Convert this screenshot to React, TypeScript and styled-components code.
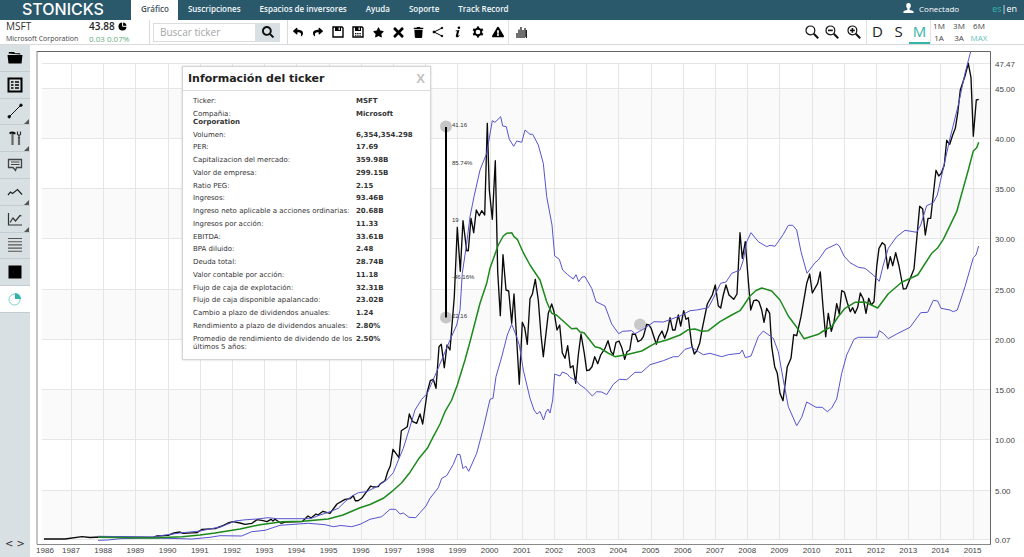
import React from "react";
import styled, { createGlobalStyle } from "styled-components";
import { FaReply, FaShare, FaStar, FaTimes, FaSearch, FaTrash, FaExclamationTriangle } from "react-icons/fa";

const GlobalStyle = createGlobalStyle`
  *, *::before, *::after { box-sizing: border-box; }
  body { margin: 0; background: #fff; color: #222; font-family: "Open Sans", "Noto Sans", sans-serif; }
  button { font: inherit; color: inherit; background: none; border: 0; padding: 0; cursor: pointer; }
  a { color: inherit; text-decoration: none; }
  svg { display: block; }
`;

const Page = styled.div`
  display: flex;
  flex-direction: column;
  min-height: 100vh;
`;

/* ---------- header ---------- */

const Header = styled.header`
  display: flex;
  align-items: stretch;
  height: 20px;
  background: #2a596b;
  color: #fff;
  font-size: 8px;
  line-height: 20px;
`;

const Logo = styled.a`
  width: 131px;
  padding-left: 22px;
  font: 500 16px/18px Inter, sans-serif;
`;

const Nav = styled.nav`
  display: flex;
  flex: 1;
`;

const NavLink = styled.a<{ $active?: boolean }>`
  height: 20px;
  padding: 0 9px 0 10px;
  line-height: 17px;
  font-weight: 600;
  background: ${(p) => (p.$active ? "#fff" : "transparent")};
  color: ${(p) => (p.$active ? "#41525b" : "#f4f8fa")};
`;

const Account = styled.div`
  display: flex;
  align-items: center;
  gap: 5px;
  padding-right: 33px;
  height: 17px;
  line-height: 17px;
`;

const Languages = styled.div`
  padding-right: 7px;
  font-size: 9px;
  line-height: 17px;
`;

const ActiveLanguage = styled.a`
  color: #35b5a8;
`;

/* ---------- toolbar ---------- */

const Toolbar = styled.div`
  display: flex;
  height: 25px;
  border-bottom: 1px solid #d9d9d9;
`;

const Quote = styled.div`
  display: grid;
  grid-template-columns: 83px 1fr;
  align-content: center;
  width: 150px;
  padding-left: 6px;
  border-right: 1px solid #d9d9d9;
  white-space: nowrap;
  line-height: 11px;
`;

const Symbol = styled.span`
  font-size: 10px;
  line-height: 13px;
  color: #333;
`;

const Price = styled.span`
  display: flex;
  align-items: center;
  gap: 3px;
  font-size: 10px;
  line-height: 13px;
  font-weight: 600;
`;

const Company = styled.span`
  font-size: 7px;
  color: #444;
`;

const Change = styled.span`
  font-size: 8px;
  color: #62ad7c;
`;

const SearchForm = styled.form`
  display: flex;
  align-items: center;
  width: 138px;
  padding-left: 3px;
  border-right: 1px solid #d9d9d9;
`;

const SearchInput = styled.input`
  width: 102px;
  height: 19px;
  padding: 0 6px;
  border: 1px solid #d9dddf;
  border-right: 0;
  border-radius: 0;
  font: 10px "Open Sans", sans-serif;
  color: #333;
  outline: none;
  &::placeholder { color: #a5a5a5; opacity: 1; }
`;

const SearchButton = styled.button`
  display: grid;
  place-items: center;
  width: 25px;
  height: 19px;
  background: #d8e0e3;
  color: #111;
`;

const ToolGroup = styled.div<{ $divided?: boolean }>`
  display: flex;
  align-items: center;
  color: #000;
  border-right: ${(p) => (p.$divided ? "1px solid #e2e2e2" : "0")};
`;

const ToolButton = styled.button<{ $wide?: boolean }>`
  display: grid;
  place-items: center;
  width: ${(p) => (p.$wide ? "24px" : "20px")};
  height: 24px;
`;

const RightTools = styled.div`
  display: flex;
  margin-left: auto;
  padding-right: 37px;
`;

const PeriodButton = styled.button<{ $active?: boolean }>`
  width: 21px;
  height: 24px;
  font-size: 15px;
  line-height: 22px;
  color: ${(p) => (p.$active ? "#35b5a8" : "#222")};
  border-bottom: 2px solid ${(p) => (p.$active ? "#35b5a8" : "transparent")};
`;

const RangeGrid = styled.div`
  display: grid;
  grid-template-columns: repeat(3, 16px);
  grid-auto-rows: 12px;
  column-gap: 4px;
  border-left: 1px solid #e2e2e2;
  font-size: 8px;
  line-height: 12px;
`;

const RangeButton = styled.button<{ $active?: boolean }>`
  display: flex;
  justify-content: center;
  white-space: nowrap;
  color: ${(p) => (p.$active ? "#5fc2b8" : "#444")};
`;

/* ---------- work area ---------- */

const Workspace = styled.main`
  display: flex;
  flex: 1;
`;

const Sidebar = styled.aside`
  display: flex;
  flex-direction: column;
  justify-content: space-between;
  width: 30px;
  background: #d8e0e3;
`;

const SideTools = styled.div`
  display: grid;
  grid-template-rows: repeat(10, 1fr);
  height: 268px;
`;

const SideButton = styled.button<{ $active?: boolean; $menu?: boolean }>`
  position: relative;
  display: grid;
  place-items: center;
  border-bottom: 1px solid #c3cdd1;
  background: ${(p) => (p.$active ? "#fff" : "transparent")};
  &::after {
    content: "";
    display: ${(p) => (p.$menu ? "block" : "none")};
    position: absolute;
    right: 1px;
    bottom: 0;
    border-left: 5px solid transparent;
    border-bottom: 5px solid #555;
  }
`;

const CodeToggle = styled.button`
  height: 26px;
  font: 10px/26px "DejaVu Sans", sans-serif;
  color: #333;
  white-space: nowrap;
`;

const ChartArea = styled.section`
  position: relative;
  flex: 1;
  min-width: 0;
`;

const ChartSvg = styled.svg`
  width: 100%;
  height: auto;
`;

const AxisText = styled.text`
  font: 8px "Liberation Sans", Arial, sans-serif;
  fill: #444;
`;

const NoteText = styled.text`
  font: 6px "Liberation Sans", Arial, sans-serif;
  fill: #333;
`;

/* ---------- ticker dialog ---------- */

const Dialog = styled.section`
  position: absolute;
  top: 21px;
  left: 152px;
  display: flex;
  flex-direction: column;
  width: 249px;
  height: 294px;
  background: #fff;
  border: 1px solid #d5d5d5;
  box-shadow: 0 0 2px #ccc;
  font-family: "DejaVu Sans", Verdana, sans-serif;
`;

const DialogHead = styled.div`
  display: flex;
  justify-content: space-between;
  align-items: center;
  height: 24px;
  padding: 0 5px;
  border-bottom: 1px solid #ddd;
`;

const DialogTitle = styled.h2`
  margin: 0;
  font-size: 11px;
  line-height: 23px;
`;

const CloseButton = styled.button`
  font: bold 13px "Liberation Sans", sans-serif;
  color: #c2c2c2;
`;

const Facts = styled.dl`
  flex: 1;
  display: flex;
  flex-direction: column;
  justify-content: space-between;
  margin: 0;
  padding: 6px 8px 8px 10px;
  font-size: 7px;
  line-height: 8px;
  color: #333;
`;

const Fact = styled.div`
  dt { display: inline-block; width: 163px; padding-right: 1px; vertical-align: top; }
  dd { display: inline; margin: 0; font-weight: bold; }
`;

/* ---------- data ---------- */

const years = Array.from({ length: 30 }, (_, i) => 1986 + i);
const yearX = (year: number) => (year === 1986 ? 44 : 71 + (year - 1987) * 32.2);

const levels: [string, number][] = [
  ["47.47", 63.5], ["45.00", 88.5], ["40.00", 138.5], ["35.00", 188.5], ["30.00", 238.5],
  ["25.00", 289.5], ["20.00", 339.5], ["15.00", 389.5], ["10.00", 439.5], ["5.00", 490.5], ["0.07", 539.5],
];

const pricePoints =
  "44,539 65,539 82,536.7 90,537.5 100,537 153,537.3 157,536 168,535.3 174,533 180,532 183,533.3 197,532.7 202,529.3 215,528.7 222,526 228,523 233,521.7 240,523 245,524.3 252,523.3 257,519.7 263,520.7 267,521.7 271,519.3 273,521 275,519.3 281,523.3 285,522 302,521.7 308,516 311,518 316,514 318,515 323,511.3 330,513.3 334,508 337,504 345,499.3 350,498.7 353.3,495.7 355.3,500.7 358,500.7 361.7,498.3 367.3,490.7 370.7,486 373,487 378.3,486.7 380,484 385,480.7 387.7,471.7 390.3,466 393,449.3 399,457.7 401.3,430.7 407.3,426.7 409.3,414 412.3,421.3 416.7,423.3 420,414 422.7,424 427.3,391.7 430.3,380.7 433.3,379.3 436,388.3 439,346.7 441.3,344.3 444.3,367.7 447,345 450,350 454.3,296.7 457.3,227.3 460.3,271.3 463,220.7 466.7,250.7 468.3,250.7 471,218.3 473.7,232.7 476.3,210 479.3,215.7 481.7,210.7 484.7,215 487.3,123.3 489.3,190 492.3,219.3 495.3,160.7 497.7,271.7 500.3,315.7 503,254.7 506,290 508.7,291 511.7,323.3 514,294 519.3,384.3 522.3,322.3 524.7,327.7 527.3,344.3 530,298.7 532.3,294.3 535.3,279.3 538.3,300 541,335 543.3,356.7 548.3,313.3 551.7,304 554,311.7 557,330 559.7,325 562.3,352.7 565,358.3 567.7,345.7 570.3,367.7 573,365.7 575.7,383.3 578.3,355 581,334 584.3,353.3 586.7,370.7 589.3,370 592,366.7 594.7,356.7 597.7,363.7 600.7,355 605,348.3 608,340.7 611,351.7 613.3,354.7 616,342.3 619,341 622,348.3 624.7,359.3 627,351.7 629.7,350 632.3,334 635.3,334.3 638,341.7 641,340 643.3,336.7 646.7,324.3 649,325 651.3,328.7 656.3,344.3 658.7,336.7 662,331 664.7,338.3 667.7,330 670,317.7 672.7,330 675,330 678.3,315 680.7,326 683.7,310.7 686,319.3 688.3,317.7 691.7,345 694.3,354 696.7,351 699.7,343.3 702.3,328.3 707.3,304 712.3,295 715.3,285 718.3,306 720.7,308 723.3,295 726,285 729,295 733.7,299.3 737,294 740,232.7 742.3,258.3 745.3,241.7 748,276.7 750.7,310 753.7,300.7 756.7,300 759,301.7 761.7,310 764,322.3 766.7,308.3 769.7,313.3 771.7,346.7 774.7,366.7 777.3,373.3 780,393.3 783,400.7 787.3,366.7 791,358.3 793.7,334.7 796.7,335.7 801,316.7 806.7,283.3 809.7,274 812.3,293 817.7,283.3 820.3,272 823,306.7 825.7,336.7 828.3,313.3 831.3,331.3 834,321.7 836.7,303.7 839.3,314 841.7,290.7 844.3,292 847.3,302.7 850.3,311.7 852.7,307.7 855,313.3 857.7,307.3 860.3,293 863.3,299 866,313.3 868.7,298.3 871.3,305 874,301.7 876.7,266.7 879,248.3 882.3,242.7 885,245 887.7,268.7 890.3,256.7 892.7,265.7 895.7,252.7 899,266 903.3,289 906,288.7 914,269 919.7,206.3 922.7,209 925.3,235 928,218.3 930.7,218.3 936,170.3 938.7,176 941.3,173.3 944.3,165 946.7,140.3 949.7,144.3 952.7,135 955.3,128.3 957.7,113.3 960.3,90 965,76 968.3,63.3 971,77.7 973.3,136.3 976.3,100 978.7,99.3";

const averagePoints =
  "98,537.3 152,538 182,536.7 200,535 215,533 240,529 260,524.7 282,521.7 303,521.3 328,519 343,515 360,507.7 370,504.5 383.3,498.3 391.7,491.7 401.7,482.7 409.3,473.3 418.3,459.3 427.3,448.3 433.3,436.7 440,424 445,411.7 451.7,400 457.3,385 465,360 470,341.7 480,303.3 486.7,283.3 490,268.3 498.3,245 503.3,236 506.7,233.3 511.7,232.7 514,236.7 517.3,239.3 523.3,252.7 530,265 540,280 546.7,301.7 551.7,313.3 556.7,315.3 571.7,328.7 576.7,328.3 580,332 584,332.7 595,346.7 600,348 608,353 615,356.7 628.3,354.3 641.7,351 655,343.3 666.7,340 680,335 688.3,329.7 695,329 701.7,331.3 708.3,330.7 720,321.7 731.7,315 740,310.7 744,305 750,296 756,290.5 761.7,288 771.7,291 780,300 788.3,316 796.7,327.3 804,338.7 818.3,334.3 823.3,331 831.7,326.7 838,317 845,308.3 855,302.3 865,302 877.7,308 888.3,293.7 901.7,282.3 917.7,275 931.7,253.3 937.3,248.3 943.3,239.3 956.7,211.7 968.3,170 973.3,151 976.7,147.7 978.7,142.3";

const upperPoints =
  "98,536.3 153,537 165,535 180,533 200,531 222,526.5 235,521 245,519.8 257,519 268,517.7 277,518.7 310,518.7 320,515 330,511.7 338.3,508.3 345,501.7 352,496 358.3,492.7 366.7,491.7 376.7,486.7 386.7,480 393.3,472.7 398,461 403.3,448.3 410,426.7 415,410 421.7,399.3 427.3,393.3 436.7,371.7 450,340 456.7,325 460,310 462.3,273.3 466.7,243.3 470,216.7 474,196.7 480,170 486.7,153.3 492.3,120.7 495,122.3 500.7,116.7 502.7,126 506.3,126.7 509.3,139.3 513.7,146.3 516.7,141 521.7,142.3 525,130 530,134.3 532.7,134.3 538.3,145 543.3,163.3 546.7,196.7 552,225 554.7,256 559.3,259.3 562.7,270 567.7,274.7 573.3,279 576,274.7 578.7,281.7 582,277 585,276.7 591.7,288.3 596,301.7 605,306 611.7,324 618.7,333.7 622.7,331.3 631.7,330.7 635,333.7 643.3,329.3 654,321.7 663.3,322 680,316 690,310.7 696.7,310 708.3,307.7 713.3,298.3 720.7,283.3 726,282 731.7,273.3 740,270 743.3,260 746.7,241.7 751,232.7 758.3,241.7 766.7,246.7 770,245.3 775,246.3 783.3,234.3 788.3,225.3 792.7,225.3 796.7,230 801,251.7 807,273.3 815,262.7 818.3,260 826,249 836.7,244 839.3,246 844,256 850,262.7 858.3,267.3 865,268.3 873.3,275 879.3,281.3 883.3,265 888.3,248.3 896.7,236.7 905,230.3 916.7,232.3 920.7,225 926.7,205.7 933.3,202.7 937.3,195 943.3,168.3 950,138.3 958.3,105 965,73.3 970.7,51.5";

const lowerPoints =
  "98,540.3 108,540 120,538.7 150,538 175,538.5 192,539 210,537.3 220,535.7 241.7,536 251.7,531.7 265,530.3 280,525.3 308.3,523.3 325,524.7 333.3,526.7 341,525.5 351.7,526.7 360,524.3 370,519.3 381.7,516.7 390,509.3 395.7,509.3 400,514 403.3,513 409,517.3 415.7,517.7 420,512.7 426,506 430,498.3 438.3,487.7 441.7,478.3 446.7,475.7 453.3,464.3 457.3,454.3 460,454.7 463,468.7 465.7,466 468.7,471.3 476.7,453.3 483.3,428.3 490,399.3 493,398.3 496,376.7 501.7,357 507.3,335 511.7,324.3 516,335 519.3,345 523.3,370 530,398.3 534,410 537,414 540,411.5 543.5,420 546,412 548,409 550,413 552.7,400 554.7,374 560,376 562.3,372 567.3,374 570,377.3 576.7,381 580,385 585,388.3 592.3,396 596.7,391.7 601.7,392 606.7,394.7 613.3,384.3 619.3,379.3 626.7,379.7 635,372.3 641.7,372.3 650,364.7 663.3,360.7 673.3,356.7 678.3,356.7 685,349.3 691.7,347.3 698.3,351.7 703.3,354.7 710,353.3 721.7,356.7 728.3,354.7 740,353.3 742.3,350 745.3,357.7 751,356 758.3,336.7 763.3,331 773.3,338.3 778.3,351.7 783.3,380 788.3,406.7 796.7,425.7 801.7,417.3 806.7,402 816,407.3 822.3,407.3 827.3,411.7 831.7,408 836.7,399 841.7,373.3 846.7,355 854,339.3 858.3,337.3 877.3,337.3 879.3,330.7 883.3,333.3 888.3,338.7 896.7,334 910,327.3 920.7,312.7 927.7,312.3 933.3,300.3 937.7,301 941,308.3 950,310 953.3,311.7 957.3,310 965,286.7 973.3,257.7 976,255 978.7,246";

const facts: [string, string][] = [
  ["Ticker:", "MSFT"],
  ["Compañia:", "Microsoft Corporation"],
  ["Volumen:", "6,354,354.298"],
  ["PER:", "17.69"],
  ["Capitalizacion del mercado:", "359.98B"],
  ["Valor de empresa:", "299.15B"],
  ["Ratio PEG:", "2.15"],
  ["Ingresos:", "93.46B"],
  ["Ingreso neto aplicable a acciones ordinarias:", "20.68B"],
  ["Ingresos por acción:", "11.33"],
  ["EBITDA:", "33.61B"],
  ["BPA diluido:", "2.48"],
  ["Deuda total:", "28.74B"],
  ["Valor contable por acción:", "11.18"],
  ["Flujo de caja de explotación:", "32.31B"],
  ["Flujo de caja disponible apalancado:", "23.02B"],
  ["Cambio a plazo de dividendos anuales:", "1.24"],
  ["Rendimiento a plazo de dividendos anuales:", "2.80%"],
  ["Promedio de rendimiento de dividendo de los últimos 5 años:", "2.50%"],
];

/* ---------- icons ---------- */

const SaveIcon = ({ dotted }: { dotted?: boolean }) => (
  <svg width="12" height="12" viewBox="0 0 12 12" fill="none" stroke="#000">
    <path d="M1 1h9l1 1v9H1z" strokeWidth="1.4" />
    <path d="M3 1h6v4H3z" fill="#000" stroke="none" />
    <path d="M6.6 1.6h1.2v2.4H6.6z" fill="#fff" stroke="none" />
    {dotted && <path d="M3 7.5h6M3 9.3h6" strokeDasharray="1.4 .8" strokeWidth="1.1" />}
  </svg>
);

const ShareNodesIcon = () => (
  <svg width="12" height="12" viewBox="0 0 12 12" stroke="#000" strokeWidth="1">
    <path d="M10 2 2 6l8 4" fill="none" />
    <circle cx="10" cy="2" r=".8" /><circle cx="2" cy="6" r="1" /><circle cx="10" cy="10" r=".8" />
  </svg>
);

const InfoIcon = () => (
  <svg width="8" height="12" viewBox="0 0 8 12" fill="#000">
    <circle cx="4.9" cy="1.8" r="1.3" />
    <path d="M1.7 4.6 5.4 4.1 4 9.6c0 .5.6.3 1.3-.5l.4.4C4.6 11 3.6 11.4 2.7 11.3c-1-.1-1-.9-.8-1.7L3 5.3H1.6z" />
  </svg>
);

const GearIcon = () => (
  <svg width="12" height="12" viewBox="0 0 12 12" fill="none" stroke="#000">
    <circle cx="6" cy="6" r="3.3" strokeWidth="1.9" />
    <path d="M6 .4v2M6 9.6v2M1.2 3.2l1.7 1M9.1 7.8l1.700 1M1.200 8.800l1.700-1M9.100 4.200l1.700-1" strokeWidth="2.200" />
  </svg>
);

const BarsIcon = () => (
  <svg width="11" height="12" viewBox="0 0 11 12" stroke="#222" strokeWidth="1.3">
    <path d="M1 12V7M3 12V3.5M5 12V1M7 12V4M9 12V2M10.5 12V4" />
  </svg>
);

const LensIcon = ({ sign }: { sign?: "+" | "-" }) => (
  <svg width="14" height="14" viewBox="0 0 14 14" fill="none" stroke="#111">
    <circle cx="5.4" cy="5.4" r="4.4" strokeWidth="1.2" />
    <path d="m8.8 8.8 4.4 4.4" strokeWidth="2" />
    {sign && <path d="M3 5.4h4.8" strokeWidth="1.6" />}
    {sign === "+" && <path d="M5.4 3v4.8" strokeWidth="1.6" />}
  </svg>
);

const UserIcon = () => (
  <svg width="11" height="11" viewBox="0 0 11 11" fill="#fff">
    <path d="M5.5 0C3.9 0 3.1 1.2 3.2 2.8c.1 1.4.6 2.2 1.2 2.8v1.1C3 7.3.8 7.6.4 8.8V10h10.2V8.8C10.2 7.6 8 7.3 6.6 6.7V5.6c.6-.6 1.1-1.4 1.2-2.8C7.9 1.2 7.1 0 5.5 0z" />
  </svg>
);

const ClockIcon = () => (
  <svg width="9" height="9" viewBox="0 0 9 9">
    <circle cx="4.5" cy="4.5" r="4" fill="#000" />
    <path d="M4.6 0v4.3H9" fill="none" stroke="#fff" strokeWidth="1" />
  </svg>
);

const sideIcons: { name: string; menu?: boolean; active?: boolean; art: React.ReactNode }[] = [
  { name: "Abrir", art: <path d="M1.5 3.5 2 2h5l1 1.2h5l.5 1.3zM.5 5h15l-1 8.500h-13z" fill="#000" /> },
  {
    name: "Lista",
    art: (
      <g stroke="#000" fill="none">
        <path d="M1.5 1.5h13v13h-13z" strokeWidth="2" />
        <path d="M4 5h2.500M4 8h2.500M4 11h2.500M8 5h4M8 8h4M8 11h4" strokeWidth="1.700" />
      </g>
    ),
  },
  {
    name: "Línea", menu: true,
    art: <g stroke="#111"><path d="m2 14 12-12" /><circle cx="2.2" cy="13.8" r="1.2" /><circle cx="14" cy="2.2" r="1.2" /></g>,
  },
  {
    name: "Herramientas", menu: true,
    art: (
      <g>
        <path d="M2.500 2c2-.8 4-.8 6 .6v1.600H6.500L4.500 3.500l-1 .7-1-.3z" fill="#111" />
        <path d="M5.500 4v11M12 7v8" stroke="#666" strokeWidth="2.2" />
        <path d="M10.500 1.500v3l1.500 1 1.500-1v-3M12 5v3" stroke="#333" fill="none" strokeWidth="1.2" />
      </g>
    ),
  },
  {
    name: "Comentario",
    art: <g stroke="#444" fill="none"><path d="M1.500 2.500h13v8H9.500l-1 3-2.500-3H1.500z" strokeWidth="1.3" /><path d="M4 5h8.500M4 7.500h8.500" /></g>,
  },
  { name: "Ondas", menu: true, art: <path d="m1 11 2.500-3 2 1.500L10.500 5.500l4.500 5" fill="none" stroke="#222" strokeWidth="1.2" /> },
  {
    name: "Indicadores", menu: true,
    art: <g fill="none" stroke="#333" strokeWidth="1.2"><path d="M1.500 2v12H15" /><path d="m3 11.500 3-4.500 2.500 3 4.500-5.500 1.500.5" /></g>,
  },
  { name: "Niveles", art: <path d="M1 1.500h14M1 4.700h14M1 7.900h14M1 11.100h14M1 14.300h14" stroke="#555" strokeWidth="1.1" /> },
  { name: "Color", art: <path d="M1.500 1.500h13v13h-13z" fill="#000" /> },
  {
    name: "Información", active: true,
    art: <g><circle cx="7.5" cy="8.5" r="5.5" fill="none" stroke="#76cfc5" strokeWidth="1" /><path d="M8 8V2a6 6 0 0 1 6 6z" fill="#35b5a8" /></g>,
  },
];

const actions: [string, React.ReactNode][] = [
  ["Deshacer", <FaReply size={10} />],
  ["Rehacer", <FaShare size={10} />],
  ["Guardar", <SaveIcon />],
  ["Guardar como", <SaveIcon dotted />],
  ["Favorito", <FaStar size={11} />],
  ["Cerrar", <FaTimes size={15} />],
  ["Borrar", <FaTrash size={11} />],
  ["Compartir", <ShareNodesIcon />],
  ["Información", <InfoIcon />],
  ["Ajustes", <GearIcon />],
  ["Alertas", <FaExclamationTriangle size={12} />],
];

const ranges = ["1M", "3M", "6M", "1A", "3A", "MAX"];

const PriceChart = () => (
  <ChartSvg viewBox="30 45 994 512" role="img" aria-label="Cotización de MSFT">
    {levels.slice(1).map(([label, y], i) =>
      i % 2 === 0 && levels[i + 2] ? (
        <rect key={label} x="42" y={y} width="948" height={levels[i + 2][1] - y} fill="#fafafa" />
      ) : null
    )}
    <g stroke="#e6e6e6" strokeWidth="1">
      {levels.map(([label, y]) => <path key={label} d={`M42 ${y}H990`} />)}
      {years.slice(1).map((year) => <path key={year} d={`M${Math.round(yearX(year)) + 0.5} 63V540`} />)}
    </g>
    <circle cx="640" cy="324.5" r="6" fill="#c9c9c9" />
    <g fill="none" strokeLinejoin="round">
      <polyline points={pricePoints} stroke="#0a0a0a" strokeWidth="1.35" />
      <polyline points={upperPoints} stroke="#5654d0" strokeWidth="1" />
      <polyline points={lowerPoints} stroke="#5654d0" strokeWidth="1" />
      <polyline points={averagePoints} stroke="#1d8a1d" strokeWidth="1.5" />
      <path d="M37 51.5H990.5V545" stroke="#666" strokeWidth="1" />
      <path d="M37 51V544.5H991" stroke="#888" strokeWidth="1" />
    </g>
    <g fill="#c6c6c6"><circle cx="446" cy="126.5" r="6" /><circle cx="446" cy="317.5" r="6" /></g>
    <path d="M446 127V317.5" stroke="#000" strokeWidth="2" />
    <NoteText x="452" y="127">41.16</NoteText>
    <NoteText x="452" y="165">85.74%</NoteText>
    <NoteText x="452" y="222">19</NoteText>
    <NoteText x="452" y="279">-46.16%</NoteText>
    <NoteText x="452" y="318">22.16</NoteText>
    {levels.map(([label, y]) => <AxisText key={label} x="995" y={y + 3}>{label}</AxisText>)}
    {years.map((year) => (
      <AxisText key={year} x={year === 1986 ? 45 : yearX(year)} y="553" textAnchor="middle">{year}</AxisText>
    ))}
  </ChartSvg>
);

export default function App() {
  return (
    <Page>
      <GlobalStyle />
      <Header>
        <Logo href="#">STONICKS</Logo>
        <Nav>
          <NavLink href="#" $active>Gráfico</NavLink>
          <NavLink href="#">Suscripciones</NavLink>
          <NavLink href="#">Espacios de inversores</NavLink>
          <NavLink href="#">Ayuda</NavLink>
          <NavLink href="#">Soporte</NavLink>
          <NavLink href="#">Track Record</NavLink>
        </Nav>
        <Account><UserIcon />Conectado</Account>
        <Languages><ActiveLanguage href="#">es</ActiveLanguage>|<a href="#">en</a></Languages>
      </Header>

      <Toolbar>
        <Quote>
          <Symbol>MSFT</Symbol>
          <Price>43.88 <ClockIcon /></Price>
          <Company>Microsoft Corporation</Company>
          <Change>0.03 0.07%</Change>
        </Quote>
        <SearchForm onSubmit={(e) => e.preventDefault()}>
          <SearchInput aria-label="Buscar ticker" placeholder="Buscar ticker" />
          <SearchButton aria-label="Buscar"><FaSearch size={12} /></SearchButton>
        </SearchForm>
        <ToolGroup $divided>
          {actions.map(([name, icon]) => <ToolButton key={name} aria-label={name}>{icon}</ToolButton>)}
        </ToolGroup>
        <ToolGroup><ToolButton $wide aria-label="Volumen"><BarsIcon /></ToolButton></ToolGroup>
        <RightTools>
          <ToolGroup $divided>
            <ToolButton aria-label="Zoom"><LensIcon /></ToolButton>
            <ToolButton aria-label="Alejar"><LensIcon sign="-" /></ToolButton>
            <ToolButton $wide aria-label="Acercar"><LensIcon sign="+" /></ToolButton>
          </ToolGroup>
          <PeriodButton>D</PeriodButton>
          <PeriodButton>S</PeriodButton>
          <PeriodButton $active>M</PeriodButton>
          <RangeGrid>
            {ranges.map((r) => <RangeButton key={r} $active={r === "MAX"}>{r}</RangeButton>)}
          </RangeGrid>
        </RightTools>
      </Toolbar>

      <Workspace>
        <Sidebar>
          <SideTools>
            {sideIcons.map((s) => (
              <SideButton key={s.name} aria-label={s.name} $menu={s.menu} $active={s.active}>
                <svg width="16" height="16" viewBox="0 0 16 16">{s.art}</svg>
              </SideButton>
            ))}
          </SideTools>
          <CodeToggle>&lt; &gt;</CodeToggle>
        </Sidebar>
        <ChartArea>
          <PriceChart />
          <Dialog role="dialog" aria-labelledby="ticker-title">
            <DialogHead>
              <DialogTitle id="ticker-title">Información del ticker</DialogTitle>
              <CloseButton aria-label="Cerrar">X</CloseButton>
            </DialogHead>
            <Facts>
              {facts.map(([label, value]) => (
                <Fact key={label}><dt>{label}</dt><dd>{value}</dd></Fact>
              ))}
            </Facts>
          </Dialog>
        </ChartArea>
      </Workspace>
    </Page>
  );
}
